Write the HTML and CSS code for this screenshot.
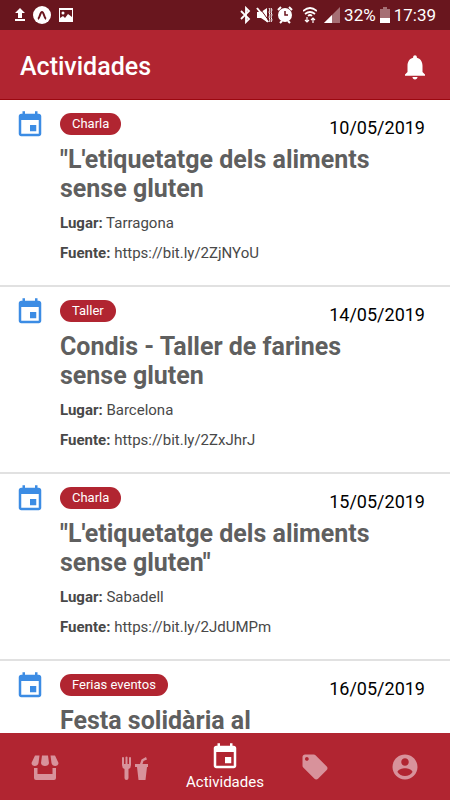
FILE: index.html
```html
<!DOCTYPE html>
<html lang="es">
<head>
    <meta charset="UTF-8">
    <meta name="viewport" content="width=device-width, initial-scale=1.0">
    <title>Actividades</title>
    <link rel="stylesheet" href="styles.css">
</head>
<body>
    <!-- icons used more than once -->
    <svg class="sprite" aria-hidden="true">
        <symbol id="event" viewBox="0 0 24 24">
            <path d="M17 12h-5v5h5v-5zM16 1v2H8V1H6v2H5c-1.100 0-2 .9-2 2v14c0 1.100.9 2 2 2h14c1.100 0 2-.9 2-2V5c0-1.100-.9-2-2-2h-1V1h-2zm3 18H5V8h14v11z"/>
        </symbol>
    </svg>

    <div class="status-bar">
        <div class="status-group">
            <svg width="12" height="16" viewBox="0 0 12 16" fill="#fff"><path d="M6 1l5 5H8v5H4V6H1zM1 12h10v2H1z"/></svg>
            <svg width="18" height="18" viewBox="0 0 18 18"><circle cx="9" cy="9" r="9" fill="#fff"/><path d="M5 13c2-1 2-7 4-7s2 6 4 7" fill="none" stroke="#69161e" stroke-width="2"/></svg>
            <svg width="16" height="16" viewBox="0 0 16 16"><path d="M1 1h14v14H1z" fill="#fff"/><path d="M2 3h12v7l-4-3-3 4-2-2-3 2z" fill="#69161e"/><circle cx="5" cy="6" r="1.500" fill="#fff"/></svg>
        </div>
        <div class="status-group status-right">
            <svg width="12" height="18" viewBox="0 0 12 18" fill="none" stroke="#fff" stroke-width="1.800"><path d="M1 5l8 8-3 3V2l3 3-8 8"/></svg>
            <svg width="17" height="18" viewBox="0 0 17 18" fill="#fff"><path d="M1 6h4l6-4v14l-6-4H1z"/><path d="M3 1l10 14" stroke="#69161e"/><path d="M1 2l11 14" stroke="#fff" stroke-width="2"/><path d="M13 2l1 2-1 2 1 3-1 2 1 3-1 2M15 2l1 2-1 2 1 3-1 2 1 3-1 2" fill="none" stroke="#fff"/></svg>
            <svg width="16" height="18" viewBox="0 0 16 18"><circle cx="8" cy="9" r="7" fill="#fff"/><path d="M1 4l3-3M15 4l-3-3M3 17l2-2M13 17l-2-2" stroke="#fff" stroke-width="2"/><path d="M8 5v4h3" fill="none" stroke="#69161e" stroke-width="1.500"/></svg>
            <svg class="wifi" width="14" height="18" viewBox="0 0 14 18" fill="none" stroke="#fff" stroke-width="1.700"><path d="M0 5q7-6 14 0M2 8q5-4 10 0M5 10q2-2 4 0"/><path d="M4 11v5M2 14l2 2 2-2M10 17v-5M8 14l2-2 2 2" stroke-width="1.200"/></svg>
            <svg width="16" height="16" viewBox="0 0 16 16"><path d="M0 16L16 0v16z" fill="#a56f74"/><path d="M0 16l8-8v8z" fill="#fff"/></svg>
            <span>32%</span>
            <svg width="10" height="16" viewBox="0 0 10 16"><path d="M3 0h4v2h3v14H0V2h3z" fill="#a56f74"/><path d="M0 11h10v5H0z" fill="#fff"/></svg>
            <span>17:39</span>
        </div>
    </div>

    <header class="header">
        <h1>Actividades</h1>
        <button class="bell" aria-label="Notificaciones">
            <svg width="30" height="30" viewBox="0 0 24 24" fill="#fff"><path d="M12 22c1.100 0 2-.9 2-2h-4c0 1.100.89 2 2 2zm6-6v-5c0-3.070-1.640-5.640-4.500-6.320V4c0-.83-.67-1.500-1.500-1.500s-1.500.67-1.500 1.500v.68C7.630 5.360 6 7.920 6 11v5l-2 2v1h16v-1l-2-2z"/></svg>
        </button>
    </header>

    <main class="list">
        <article class="item">
            <svg class="item-icon"><use href="#event"/></svg>
            <div class="item-body">
                <div class="item-top">
                    <span class="tag">Charla</span>
                    <time datetime="2019-05-10">10/05/2019</time>
                </div>
                <h2>"L'etiquetatge dels aliments sense gluten</h2>
                <p><b>Lugar:</b> Tarragona</p>
                <p><b>Fuente:</b> <a href="https://bit.ly/2ZjNYoU">https://bit.ly/2ZjNYoU</a></p>
            </div>
        </article>
        <article class="item">
            <svg class="item-icon"><use href="#event"/></svg>
            <div class="item-body">
                <div class="item-top">
                    <span class="tag">Taller</span>
                    <time datetime="2019-05-14">14/05/2019</time>
                </div>
                <h2>Condis - Taller de farines sense gluten</h2>
                <p><b>Lugar:</b> Barcelona</p>
                <p><b>Fuente:</b> <a href="https://bit.ly/2ZxJhrJ">https://bit.ly/2ZxJhrJ</a></p>
            </div>
        </article>
        <article class="item">
            <svg class="item-icon"><use href="#event"/></svg>
            <div class="item-body">
                <div class="item-top">
                    <span class="tag">Charla</span>
                    <time datetime="2019-05-15">15/05/2019</time>
                </div>
                <h2>"L'etiquetatge dels aliments sense gluten"</h2>
                <p><b>Lugar:</b> Sabadell</p>
                <p><b>Fuente:</b> <a href="https://bit.ly/2JdUMPm">https://bit.ly/2JdUMPm</a></p>
            </div>
        </article>
        <article class="item">
            <svg class="item-icon"><use href="#event"/></svg>
            <div class="item-body">
                <div class="item-top">
                    <span class="tag">Ferias eventos</span>
                    <time datetime="2019-05-16">16/05/2019</time>
                </div>
                <h2>Festa solidària al</h2>
            </div>
        </article>
    </main>

    <nav class="tabs">
        <a href="#tiendas" aria-label="Tiendas">
            <svg width="30" height="30" viewBox="0 0 30 30"><path d="M5 3.500h4.500L8.500 11c-.5 4-7 4-7 0zM12 3.500h6l1 7.500c0 4-8 4-8 0zM20.500 3.500H25l3.500 7.500c0 4-6.500 4-7 0zM4 16h3.500v6h15v-6H26v10q0 2-2 2H6q-2 0-2-2z"/></svg>
        </a>
        <a href="#restaurantes" aria-label="Restaurantes">
            <svg width="30" height="30" viewBox="0 0 30 30"><path d="M2 5.500q1-1 2 0V12h1.500V5q1-1 2 0v7H9V5.500q1-1 2 0V13q0 3-2.500 4v9q0 2-2 2t-2-2v-9Q2 16 2 13zM15 12h5l1.500-4.500L26 5l1 2.500-3.500 1.500-1 3H28v3h-1l-1.500 13h-7l-1.500-13h-2z"/></svg>
        </a>
        <a class="active" href="#actividades" aria-current="page">
            <svg width="30" height="30"><use href="#event"/></svg>
            <span>Actividades</span>
        </a>
        <a href="#ofertas" aria-label="Ofertas">
            <svg width="30" height="30" viewBox="0 0 24 24"><path d="M21.410 11.580l-9-9C12.050 2.220 11.550 2 11 2H4c-1.100 0-2 .9-2 2v7c0 .55.22 1.050.59 1.420l9 9c.36.36.86.58 1.410.58s1.050-.22 1.410-.59l7-7c.37-.36.59-.86.59-1.410s-.23-1.060-.59-1.420zM5.500 7C4.670 7 4 6.330 4 5.500S4.670 4 5.500 4 7 4.670 7 5.500 6.330 7 5.500 7z"/></svg>
        </a>
        <a href="#perfil" aria-label="Perfil">
            <svg width="30" height="30" viewBox="0 0 24 24"><path d="M12 2C6.480 2 2 6.480 2 12s4.480 10 10 10 10-4.480 10-10S17.520 2 12 2zm0 3c1.660 0 3 1.340 3 3s-1.340 3-3 3-3-1.340-3-3 1.340-3 3-3zm0 14.200c-2.500 0-4.710-1.280-6-3.220.03-1.990 4-3.080 6-3.080 1.990 0 5.970 1.090 6 3.080-1.290 1.940-3.500 3.220-6 3.220z"/></svg>
        </a>
    </nav>
</body>
</html>
```

FILE: styles.css
```css
* {
    box-sizing: border-box;
}
body {
    margin: 0;
    height: 100vh;
    display: flex;
    flex-direction: column;
    font-family: Roboto, sans-serif;
    background-color: #fff;
    color: #000;
}
svg {
    display: block;
    flex: none;
}
.sprite {
    display: none;
}
.status-bar {
    flex: none;
    display: flex;
    justify-content: space-between;
    align-items: center;
    height: 30px;
    padding: 0 14px;
    background-color: #69161e;
    color: #fff;
    font-size: 17px;
}
.status-group {
    display: flex;
    align-items: center;
    gap: 7px;
}
.status-right {
    gap: 4px;
}
.wifi {
    margin: 0 3px 0 6px;
}
.header {
    flex: none;
    display: flex;
    justify-content: space-between;
    align-items: center;
    height: 70px;
    padding: 4px 20px 0;
    border-bottom: 1px solid #9b0810;
    background-color: #b12531;
    color: #fff;
}
.header h1 {
    margin: 0;
    font-size: 25px;
    font-weight: 500;
}
.bell {
    padding: 0;
    border: none;
    background: none;
    cursor: pointer;
}
.list {
    flex: 1;
    min-height: 0;
    overflow: hidden;
}
.item {
    display: flex;
    gap: 15px;
    padding: 10px 25px 17px 15px;
    border-bottom: 2px solid #e1e1e1;
}
.item-icon {
    width: 30px;
    height: 30px;
    fill: #3c8ce4;
}
.item-body {
    flex: 1;
}
.item-top {
    display: flex;
    justify-content: space-between;
    align-items: flex-start;
    height: 35px;
    padding-top: 3px;
}
.tag {
    padding: 0 12px;
    border-radius: 11px;
    background-color: #b12531;
    color: #fff;
    font-size: 13px;
    line-height: 22px;
}
.item time {
    padding-top: 4px;
    font-size: 18px;
    line-height: 22px;
}
.item h2 {
    margin: 0 0 5px;
    padding-right: 40px;
    color: #5f5f5f;
    font-size: 25px;
    font-weight: 700;
    line-height: 29px;
}
.item p {
    margin: 0;
    color: #484848;
    font-size: 15px;
    line-height: 30px;
}
.item a {
    color: inherit;
    text-decoration: none;
}
.tabs {
    flex: none;
    display: flex;
    height: 67px;
    background-color: #b12531;
}
.tabs a {
    flex: 1;
    display: flex;
    flex-direction: column;
    align-items: center;
    justify-content: center;
    color: #fff;
    fill: #d8929b;
    font-size: 15px;
    line-height: 20px;
    text-decoration: none;
}
.tabs .active {
    fill: #fff;
}
```
